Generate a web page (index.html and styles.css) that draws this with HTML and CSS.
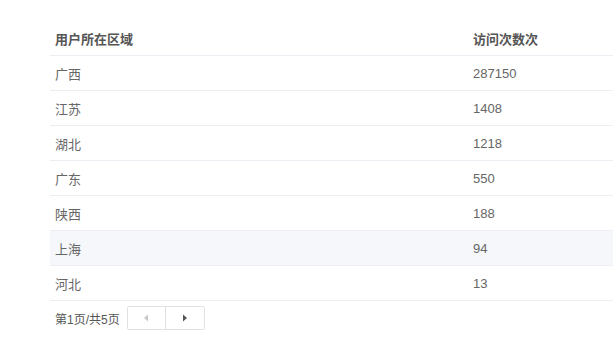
FILE: index.html
```html
<!DOCTYPE html>
<html lang="zh">
<head>
<meta charset="utf-8">
<link rel="stylesheet" href="styles.css">
</head>
<body>
<div class="wrap">
  <table class="grid">
    <thead>
      <tr><th class="c1">用户所在区域</th><th>访问次数次</th></tr>
    </thead>
    <tbody>
      <tr><td>广西</td><td>287150</td></tr>
      <tr><td>江苏</td><td>1408</td></tr>
      <tr><td>湖北</td><td>1218</td></tr>
      <tr><td>广东</td><td>550</td></tr>
      <tr><td>陕西</td><td>188</td></tr>
      <tr class="hover"><td>上海</td><td>94</td></tr>
      <tr><td>河北</td><td>13</td></tr>
    </tbody>
  </table>
  <div class="pager">
    <span class="info">第1页/共5页</span>
    <div class="btns">
      <button class="btn prev" aria-label="上一页"><svg width="6" height="8" viewBox="0 0 6 8"><path d="M5 0.5 L1 4 L5 7.5 Z" fill="#c8c8c8"/></svg></button>
      <button class="btn next" aria-label="下一页"><svg width="6" height="8" viewBox="0 0 6 8"><path d="M1 0.5 L5 4 L1 7.5 Z" fill="#555"/></svg></button>
    </div>
  </div>
</div>
</body>
</html>
```
FILE: styles.css
```css
html, body {
  margin: 0;
  padding: 0;
  background: #fff;
  overflow: hidden;
}
body {
  font-family: "Liberation Sans", "Noto Sans CJK SC", sans-serif;
  font-size: 13px;
  color: #666;
}
.wrap {
  padding: 21px 0 0 50px;
}
.grid {
  width: 100%;
  border-collapse: collapse;
  table-layout: fixed;
}
.grid th, .grid td {
  height: 34px;
  padding: 0 0 0 5px;
  text-align: left;
  border-bottom: 1px solid #ebeef3;
  vertical-align: middle;
}
.grid th {
  font-weight: bold;
  color: #555;
}
.grid .c1 {
  width: 413px;
}
.grid tr.hover td {
  background: #f5f7fa;
}
.pager {
  display: flex;
  align-items: center;
  height: 34px;
  padding-left: 5px;
}
.info {
  font-size: 12px;
  color: #555;
  margin-right: 7px;
}
.btns {
  display: flex;
  border: 1px solid #e2e2e2;
  border-radius: 2px;
}
.btn {
  width: 38px;
  height: 22px;
  border: 0;
  background: #fff;
  padding: 0;
  display: flex;
  align-items: center;
  justify-content: center;
}
.btn.prev {
  border-right: 1px solid #e2e2e2;
}
```
